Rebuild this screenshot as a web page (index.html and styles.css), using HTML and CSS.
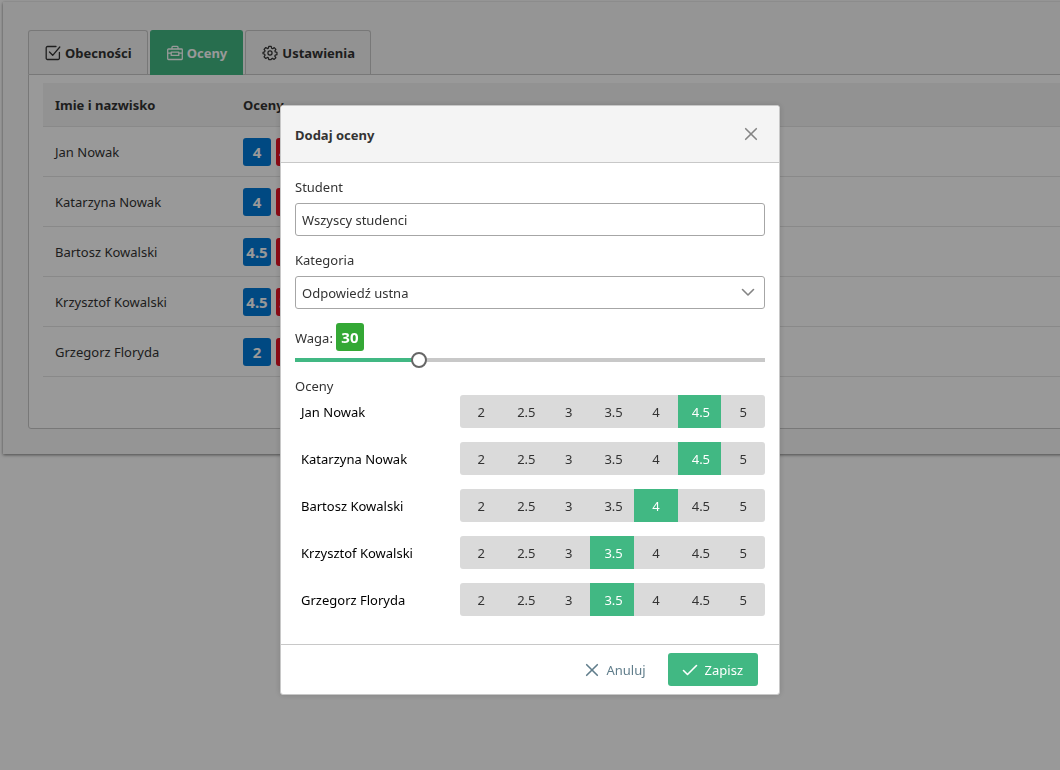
FILE: index.html
```html
<!DOCTYPE html>
<html lang="pl">
<head>
<meta charset="utf-8">
<meta name="viewport" content="width=device-width, initial-scale=1">
<title>Oceny</title>
<link rel="stylesheet" href="styles.css">
</head>
<body>
<main class="card">
  <nav class="tabs">
    <a class="tab" href="#obecnosci">
      <svg class="icon" viewBox="0 0 16 16"><path d="M11 1.500H2.500a1.300 1.300 0 0 0-1.300 1.300v10.400a1.300 1.300 0 0 0 1.300 1.300h10.600a1.300 1.300 0 0 0 1.300-1.300V7.500M4.500 7l3.200 3.300L14.800 2"/></svg>
      Obecności</a>
    <a class="tab tab-active" href="#oceny">
      <svg class="icon" viewBox="0 0 16 16"><path d="M1.500 4h13a.8.800 0 0 1 .8.800v8.900a.8.800 0 0 1-.8.800h-13a.8.800 0 0 1-.8-.8V4.800a.8.800 0 0 1 .8-.8zM5 4V2.200a.8.800 0 0 1 .8-.8h4.400a.8.800 0 0 1 .8.800V4M.8 8.200h3.400M11.800 8.200h3.400M4.200 7.200h7.600v3.200H4.200z"/></svg>
      Oceny</a>
    <a class="tab" href="#ustawienia">
      <svg class="icon" viewBox="-0.500 -0.500 17 17"><path d="M6.700 1h2.600l.4 1.900 1.100.5 1.700-1.100 1.800 1.900-1.100 1.600.4 1.100 1.800.4v2.500l-1.800.4-.5 1.100 1.100 1.700-1.800 1.800-1.700-1.100-1.100.5L9.300 15H6.700l-.4-1.800-1.100-.5-1.700 1.100-1.800-1.800L2.800 10.300l-.5-1.100L.6 8.800V7.300l1.700-.5.500-1.100-1.100-1.600 1.800-1.900 1.700 1.100 1.100-.5z"/><circle cx="8" cy="8" r="2.200"/></svg>
      Ustawienia</a>
  </nav>
  <section class="panel">
    <table class="students">
      <thead><tr><th class="col-name">Imie i nazwisko</th><th>Oceny</th></tr></thead>
      <tbody>
        <tr><td>Jan Nowak</td><td><div class="badges"><span class="badge blue">4</span><span class="badge red">4.5</span></div></td></tr>
        <tr><td>Katarzyna Nowak</td><td><div class="badges"><span class="badge blue">4</span><span class="badge red">4</span></div></td></tr>
        <tr><td>Bartosz Kowalski</td><td><div class="badges"><span class="badge blue">4.5</span><span class="badge red">3</span></div></td></tr>
        <tr><td>Krzysztof Kowalski</td><td><div class="badges"><span class="badge blue">4.5</span><span class="badge red">3.5</span></div></td></tr>
        <tr><td>Grzegorz Floryda</td><td><div class="badges"><span class="badge blue">2</span><span class="badge red">3</span></div></td></tr>
      </tbody>
    </table>
  </section>
</main>

<div class="overlay">
  <form class="dialog" role="dialog" aria-modal="true" aria-labelledby="dialog-title">
    <header class="dialog-header">
      <h2 class="dialog-title" id="dialog-title">Dodaj oceny</h2>
      <button class="close" type="button" aria-label="Zamknij"><svg class="icon" viewBox="0 0 16 16"><path d="M2.700 2.700l10.600 10.600M13.300 2.700l-10.600 10.600"/></svg></button>
    </header>
    <div class="dialog-body">
      <div class="field">
        <label for="student">Student</label>
        <input class="control" id="student" type="text" value="Wszyscy studenci">
      </div>
      <div class="field">
        <label for="category">Kategoria</label>
        <div class="select-wrap">
          <select class="control" id="category"><option>Odpowiedź ustna</option></select>
          <svg class="icon chevron" viewBox="0 0 16 16"><path d="M2.500 5.500l5.500 5.500 5.500-5.500"/></svg>
        </div>
      </div>
      <div class="weight">
        <label for="weight">Waga:</label>
        <output class="badge green" for="weight">30</output>
      </div>
      <input class="slider" id="weight" type="range" min="5" max="100" value="30" style="--fill: 0.263">
      <p class="grades-title">Oceny</p>
      <div class="grades" id="grades"></div>
    </div>
    <footer class="dialog-footer">
      <button class="button button-text" type="button"><svg class="icon" viewBox="0 0 16 16"><path d="M2.700 2.700l10.600 10.600M13.300 2.700l-10.600 10.600"/></svg>Anuluj</button>
      <button class="button button-primary" type="submit"><svg class="icon" viewBox="0 0 16 16"><path d="M1.500 8.500l4 4L14.500 3.500"/></svg>Zapisz</button>
    </footer>
  </form>
</div>
<script src="grades.js"></script>
</body>
</html>
```

FILE: styles.css
```css
* { box-sizing: border-box; }

body {
  margin: 0;
  min-height: 100vh;
  overflow: hidden;
  background: #fff;
  color: #333;
  font: 13px/20px "Noto Sans", "Open Sans", sans-serif;
}

button, input, select { font: inherit; color: inherit; }

.icon {
  width: 16px;
  height: 16px;
  flex: none;
  fill: none;
  stroke: currentColor;
  stroke-width: 1.3;
  stroke-linejoin: round;
  stroke-linecap: round;
}

/* Page */
.card {
  margin: 2px -40px 0 3px;
  padding: 28px 25px 25px;
  background: #f9f9f9;
  box-shadow: 0 1px 3px rgba(0, 0, 0, .5);
}

.tabs { display: flex; gap: 2px; }

.tab {
  display: flex;
  align-items: center;
  gap: 3px;
  height: 44px;
  padding: 1px 15px 0 16px;
  border: 1px solid #c8c8c8;
  border-bottom: 0;
  border-radius: 3px 3px 0 0;
  background: #f4f4f4;
  color: #333;
  font-weight: 700;
  text-decoration: none;
}

.tab .icon { margin-right: 1px; }

.tab-active {
  height: 45px;
  margin-bottom: -1px;
  padding-bottom: 1px;
  z-index: 1;
  border-color: #41b883;
  background: #41b883;
  color: #fff;
}

.panel {
  padding: 8px 14px 51px;
  border: 1px solid #c8c8c8;
  border-radius: 0 0 3px 3px;
  background: #fff;
}

.students { width: 100%; border-collapse: separate; border-spacing: 0; text-align: left; }
.students th { height: 44px; padding: 1px 12px 0; background: #f4f4f4; border-bottom: 1px solid #e4e4e4; }
.students td { height: 50px; padding: 0 12px; border-bottom: 1px solid #e4e4e4; }
.students .col-name { width: 188px; }

.badges { display: flex; gap: 5px; }

.badge {
  display: inline-block;
  min-width: 28px;
  height: 28px;
  border-radius: 3px;
  color: #fff;
  font-size: 15px;
  font-weight: 700;
  line-height: 28px;
  text-align: center;
}

.blue { background: #007ad9; }
.red { background: #e91224; }
.green { background: #34a835; }

/* Dialog */
.overlay {
  position: fixed;
  inset: 0;
  z-index: 2;
  display: flex;
  align-items: flex-start;
  justify-content: center;
  padding-top: 105px;
  background: rgba(0, 0, 0, .4);
}

.dialog {
  width: 500px;
  max-width: 100%;
  border: 1px solid #c8c8c8;
  border-radius: 3px;
  background: #fff;
  box-shadow: 0 0 6px rgba(0, 0, 0, .16);
}

.dialog-header {
  display: flex;
  align-items: center;
  justify-content: space-between;
  height: 57px;
  padding: 0 14px;
  border-bottom: 1px solid #c8c8c8;
  border-radius: 2px 2px 0 0;
  background: #f4f4f4;
}

.dialog-title { margin: 0; padding-top: 2px; font-size: 13px; line-height: 20px; }

.close {
  display: flex;
  padding: 6px;
  border: 0;
  background: none;
  color: #848484;
}

.close .icon { stroke-width: 1.6; }

.dialog-body { padding: 14px 14px 28px; }

.field { display: grid; gap: 6px; margin-bottom: 14px; }

.control {
  display: block;
  width: 100%;
  height: 33px;
  padding: 1px 6px 0;
  border: 1px solid #a6a6a6;
  border-radius: 3px;
  background: #fff;
  appearance: none;
}

.select-wrap { position: relative; }

.chevron {
  position: absolute;
  top: 8px;
  right: 9px;
  color: #848484;
  stroke-width: 1.6;
  pointer-events: none;
}

.weight { display: flex; align-items: center; gap: 3px; }
.weight label { padding-top: 2px; }

.slider {
  display: block;
  appearance: none;
  width: calc(100% + 16px);
  height: 18px;
  margin: 0 -8px;
  background: linear-gradient(to right,
    transparent 8px,
    #41b883 8px calc(8px + (100% - 16px) * var(--fill)),
    #c8c8c8 0 calc(100% - 8px),
    transparent 0) center / 100% 4px no-repeat;
}

.slider::-webkit-slider-thumb {
  appearance: none;
  width: 16px;
  height: 16px;
  border: 2px solid #666;
  border-radius: 50%;
  background: #fff;
}

.grades-title { margin: 7px 0 -1px; }

.grades { display: grid; gap: 14px; }

.grade-row { display: flex; align-items: center; color: #000; }
.grade-name { width: 35%; padding: 1px 0 0 6px; }

.grade-options {
  display: flex;
  width: 65%;
  overflow: hidden;
  border-radius: 3px;
  background: #dadada;
  color: #333;
}

.grade-option {
  flex: 1 1 0;
  min-width: 0;
  padding: 7px 14px 6px;
  text-align: center;
  white-space: nowrap;
}

.grade-option input { position: absolute; opacity: 0; pointer-events: none; }
.grade-option:has(:checked) { background: #41b883; color: #fff; }

.dialog-footer {
  display: flex;
  justify-content: flex-end;
  gap: 7px;
  padding: 8px 21px 8px 14px;
  border-top: 1px solid #c8c8c8;
}

.button {
  display: flex;
  align-items: center;
  gap: 7px;
  height: 33px;
  padding: 1px 15px 0 14px;
  border: 0;
  border-radius: 3px;
}

.button .icon { stroke-width: 1.6; }
.button-text { gap: 6px; background: none; color: #607d8b; }
.button-primary { background: #41b883; color: #fff; }
```

FILE: grades.js
```js
const values = ["2", "2.5", "3", "3.5", "4", "4.5", "5"];
const students = [
  ["Jan Nowak", "4.5"],
  ["Katarzyna Nowak", "4.5"],
  ["Bartosz Kowalski", "4"],
  ["Krzysztof Kowalski", "3.5"],
  ["Grzegorz Floryda", "3.5"]
];

document.getElementById("grades").innerHTML = students.map(([name, grade], i) => `
  <div class="grade-row" role="radiogroup" aria-labelledby="name-${i}">
    <span class="grade-name" id="name-${i}">${name}</span>
    <div class="grade-options">${values.map(v => `<label class="grade-option"><input type="radio" name="grade-${i}" value="${v}"${v === grade ? " checked" : ""}>${v}</label>`).join("")}</div>
  </div>`).join("");
```
